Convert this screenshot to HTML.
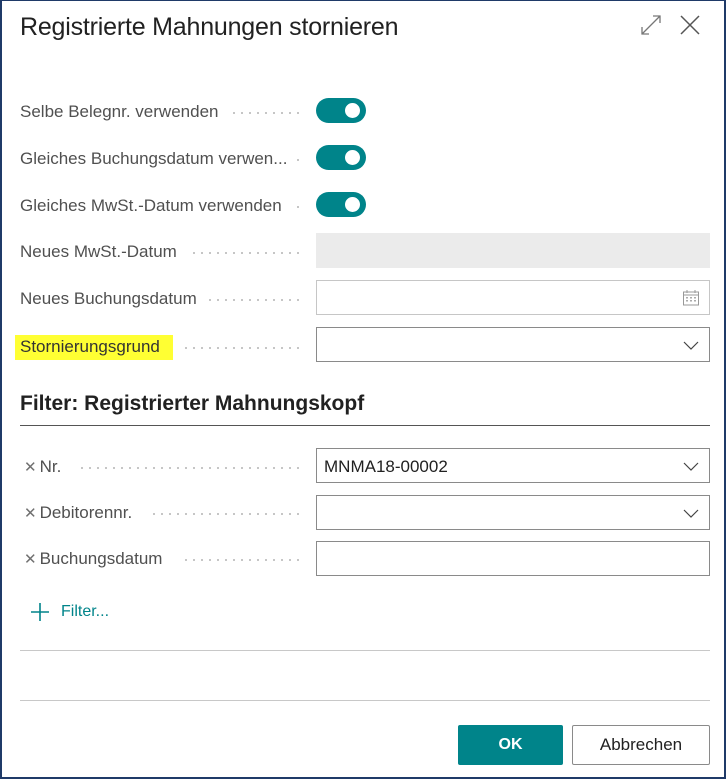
<!DOCTYPE html>
<html><head><meta charset="utf-8"><style>
*{box-sizing:border-box;margin:0;padding:0}
html,body{width:726px;height:779px;overflow:hidden;background:#fff;font-family:"Liberation Sans",sans-serif}
.frame{position:absolute;left:0;top:0;width:726px;height:779px;border:2px solid #1f3a68;border-top-width:1px}
.a{position:absolute}
.t{font-size:25px;color:#212121;left:20px;top:13px;letter-spacing:-0.2px}
.lbl{font-size:17px;color:#505050;left:20px;white-space:nowrap}
.dots{position:absolute;height:2px;background-image:radial-gradient(circle,#b8b8b8 0.9px,transparent 1.1px);background-size:8px 2px}
.tog{position:absolute;left:316px;width:50px;height:25px;border-radius:13px;background:#00848a}
.tog:after{content:"";position:absolute;right:6px;top:5px;width:15px;height:15px;border-radius:50%;background:#fff}
.fld{position:absolute;left:316px;width:394px;height:35px;border:1px solid #8a8a8a;background:#fff}
.chev{position:absolute;right:10px;top:11px}
.x{color:#707070;font-size:15px;margin-left:4px;margin-right:3px}
</style></head><body>
<div class="frame"></div>
<div class="a t">Registrierte Mahnungen stornieren</div>
<svg class="a" style="left:640px;top:14px" width="22" height="22" viewBox="0 0 22 22"><path d="M2 20L20 2M13 2h7v7M2 13v7h7" fill="none" stroke="#777" stroke-width="1.3"/></svg>
<svg class="a" style="left:679px;top:14px" width="22" height="22" viewBox="0 0 22 22"><path d="M2 2L20 20M20 2L2 20" fill="none" stroke="#555" stroke-width="1.5"/></svg>

<div class="a lbl" style="top:102px">Selbe Belegnr. verwenden</div><div class="dots" style="left:230px;width:72px;top:112px"></div>
<div class="tog" style="top:98px"></div>
<div class="a lbl" style="top:149px">Gleiches Buchungsdatum verwen...</div><div class="dots" style="left:294px;width:8px;top:159px"></div>
<div class="tog" style="top:145px"></div>
<div class="a lbl" style="top:196px">Gleiches MwSt.-Datum verwenden</div><div class="dots" style="left:294px;width:8px;top:206px"></div>
<div class="tog" style="top:192px"></div>

<div class="a lbl" style="top:242px">Neues MwSt.-Datum</div><div class="dots" style="left:190px;width:112px;top:252px"></div>
<div class="a" style="left:316px;top:233px;width:394px;height:35px;background:#ebebeb"></div>
<div class="a lbl" style="top:289px">Neues Buchungsdatum</div><div class="dots" style="left:206px;width:96px;top:299px"></div>
<div class="fld" style="top:280px;border-color:#c6c6c6"><svg class="a" style="right:9px;top:8px" width="18" height="18" viewBox="0 0 18 18"><rect x="1.5" y="3" width="15" height="13" fill="none" stroke="#999"/><path d="M1.5 6h15M5 1v3M13 1v3" stroke="#999"/><g fill="#aaa"><rect x="4" y="8" width="2" height="1.5"/><rect x="8" y="8" width="2" height="1.5"/><rect x="12" y="8" width="2" height="1.5"/><rect x="4" y="11" width="2" height="1.5"/><rect x="8" y="11" width="2" height="1.5"/><rect x="12" y="11" width="2" height="1.5"/></g></svg></div>
<div class="a" style="left:15px;top:335px;width:158px;height:25px;background:#ffff33"></div>
<div class="a lbl" style="top:337px;color:#333">Stornierungsgrund</div><div class="dots" style="left:182px;width:120px;top:347px"></div>
<div class="fld" style="top:327px"><svg class="chev" width="16" height="12" viewBox="0 0 16 12"><path d="M1 3l7 7 7-7" fill="none" stroke="#444" stroke-width="1.2"/></svg></div>

<div class="a" style="left:20px;top:392px;font-size:21px;font-weight:bold;color:#212121">Filter: Registrierter Mahnungskopf</div>
<div class="a" style="left:20px;top:425px;width:690px;height:1px;background:#555"></div>

<div class="a lbl" style="top:457px;left:20px"><span class="x">✕</span>Nr.</div><div class="dots" style="left:78px;width:224px;top:467px"></div>
<div class="fld" style="top:448px"><span class="a" style="left:7px;top:8px;font-size:17px;color:#212121">MNMA18-00002</span><svg class="chev" width="16" height="12" viewBox="0 0 16 12"><path d="M1 3l7 7 7-7" fill="none" stroke="#444" stroke-width="1.2"/></svg></div>
<div class="a lbl" style="top:503px"><span class="x">✕</span>Debitorennr.</div><div class="dots" style="left:150px;width:152px;top:513px"></div>
<div class="fld" style="top:495px"><svg class="chev" width="16" height="12" viewBox="0 0 16 12"><path d="M1 3l7 7 7-7" fill="none" stroke="#444" stroke-width="1.2"/></svg></div>
<div class="a lbl" style="top:549px"><span class="x">✕</span>Buchungsdatum</div><div class="dots" style="left:182px;width:120px;top:559px"></div>
<div class="fld" style="top:541px"></div>

<svg class="a" style="left:30px;top:602px" width="20" height="20" viewBox="0 0 20 20"><path d="M10 1v18M1 10h18" stroke="#00848a" stroke-width="1.6"/></svg>
<div class="a" style="left:61px;top:603px;font-size:16px;color:#00848a">Filter...</div>

<div class="a" style="left:20px;top:650px;width:690px;height:1px;background:#c8c8c8"></div>
<div class="a" style="left:20px;top:700px;width:690px;height:1px;background:#c8c8c8"></div>

<div class="a" style="left:458px;top:725px;width:105px;height:40px;background:#00848a;border-radius:2px;color:#fff;font-weight:bold;font-size:16px;text-align:center;line-height:40px">OK</div>
<div class="a" style="left:572px;top:725px;width:138px;height:40px;border:1px solid #8a8a8a;border-radius:2px;color:#212121;font-size:17px;text-align:center;line-height:38px">Abbrechen</div>
</body></html>
